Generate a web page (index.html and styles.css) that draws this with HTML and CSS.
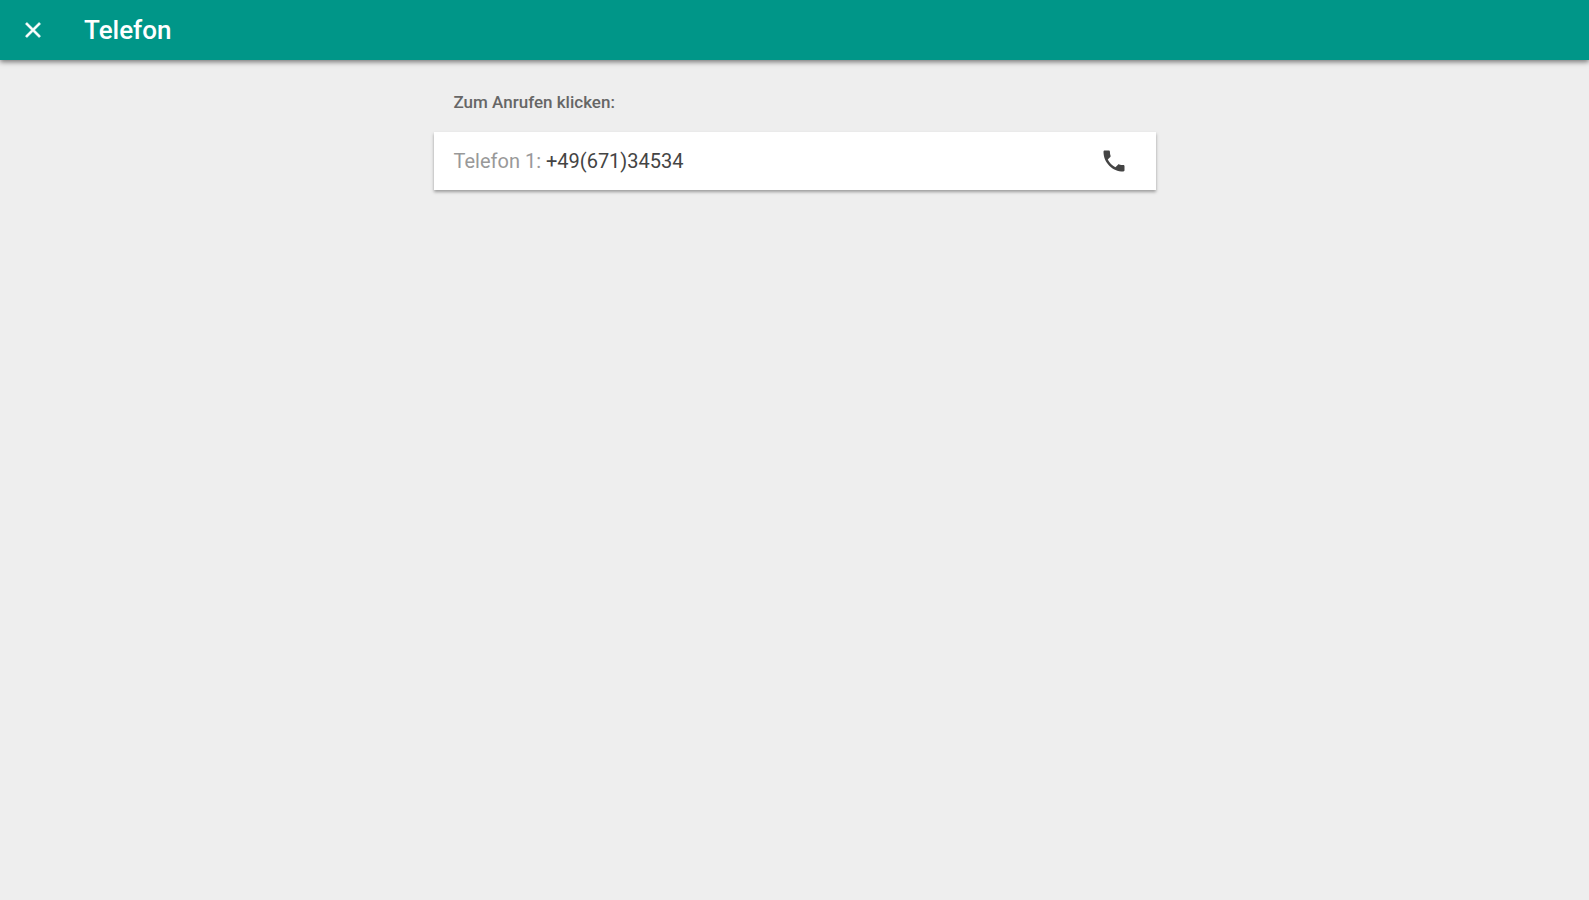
FILE: index.html
```html
<!DOCTYPE html>
<html lang="de">
<head>
  <meta charset="UTF-8">
  <meta name="viewport" content="width=device-width, initial-scale=1">
  <title>Telefon</title>
  <link rel="stylesheet" href="styles.css">
</head>
<body>
  <header class="toolbar">
    <button class="close" type="button" aria-label="Schließen">
      <svg viewBox="0 0 24 24"><path d="M19 6.41L17.59 5 12 10.59 6.41 5 5 6.41 10.59 12 5 17.59 6.41 19 12 13.41 17.59 19 19 17.59 13.41 12z"/></svg>
    </button>
    <h1>Telefon</h1>
  </header>

  <main class="container">
    <p class="hint">Zum Anrufen klicken:</p>
    <a class="card" href="tel:+4967134534">
      <span><span class="label">Telefon 1:</span> +49(671)34534</span>
      <svg class="phone" viewBox="0 0 24 24"><path d="M6.62 10.79c1.44 2.83 3.76 5.14 6.59 6.59l2.2-2.2c.27-.27.67-.36 1.02-.24 1.12.37 2.33.57 3.57.57.55 0 1 .45 1 1V20c0 .55-.45 1-1 1-9.39 0-17-7.61-17-17 0-.55.45-1 1-1h3.5c.55 0 1 .45 1 1 0 1.25.2 2.45.57 3.57.11.35.03.74-.25 1.02l-2.2 2.2z"/></svg>
    </a>
  </main>
</body>
</html>
```

FILE: styles.css
```css
* { box-sizing: border-box; }
body { margin: 0; min-height: 100vh; background: #eee; color: #666; font-family: Roboto, sans-serif; }
.toolbar { display: flex; align-items: center; height: 60px; padding: 0 20px; background: #009688; color: #fff; box-shadow: 0 2px 5px rgba(0,0,0,0.5); }
.toolbar h1 { margin: 0 0 0 38px; font-size: 26px; font-weight: 500; line-height: 32px; }
.close { display: flex; padding: 0; border: 0; background: none; color: inherit; cursor: pointer; }
svg { display: block; width: 26px; height: 26px; fill: currentColor; }
.close svg { stroke: currentColor; stroke-width: 0.5; }
.container { max-width: 722px; margin: 0 auto; padding-top: 32px; }
.hint { margin: 0; padding: 0 20px; font-size: 17px; font-weight: 500; line-height: 20px; }
.card { display: flex; align-items: center; justify-content: space-between; height: 58px; margin-top: 20px; padding: 0 28px 0 20px; background: #fff; color: #444; font-size: 20px; line-height: 24px; text-decoration: none; box-shadow: 0 2px 3px rgba(0,0,0,0.35); }
.label { color: #999; }
.phone { width: 28px; height: 28px; }
```
